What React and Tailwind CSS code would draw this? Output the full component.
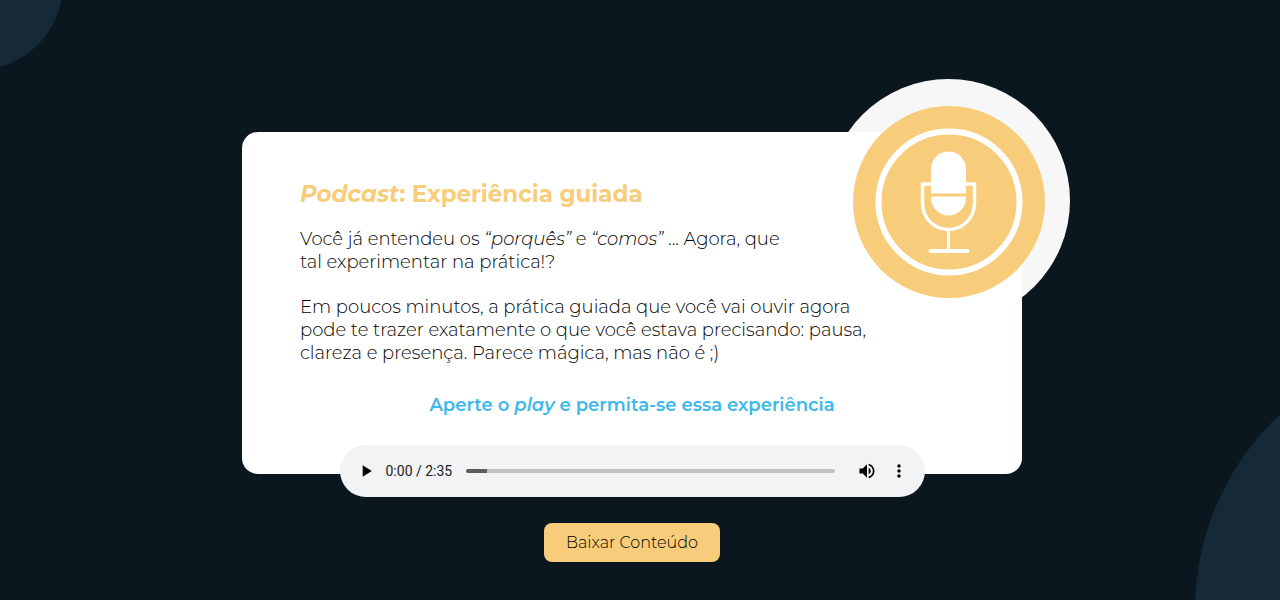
import { useState } from 'react'
import { MdPlayArrow, MdVolumeUp, MdMoreVert } from 'react-icons/md'

const DURATION = 155

function MicBadge() {
  return (
    <svg viewBox="0 0 192 192" className="w-full h-full" aria-hidden="true">
      <circle cx="96" cy="96" r="96" fill="#f7cd7b" />
      <circle cx="96" cy="96" r="70.5" fill="none" stroke="#fff" strokeWidth="6" />
      {/* Capsule */}
      <path d="M78 87.500V63a17.500 17.500 0 0 1 35 0v24.500z" fill="#fff" />
      <path d="M78 90.500h35v1.500a17.500 17.500 0 0 1-35 0z" fill="#fff" />
      {/* Cradle */}
      <path
        d="M78 78h-8.500v19.500a26 26 0 0 0 52 0V78H113"
        fill="none"
        stroke="#fff"
        strokeWidth="3.500"
      />
      <path d="M95.500 123v22" stroke="#fff" strokeWidth="3" />
      <path d="M77.500 145h37" stroke="#fff" strokeWidth="4" strokeLinecap="round" />
    </svg>
  )
}

function Player() {
  const [position, setPosition] = useState(9)
  const filled = (position / DURATION) * 100

  return (
    <div className="relative z-20 -mt-[29px] w-3/4 h-[52px] px-4 rounded-full bg-[#f1f3f4] flex items-center">
      <button type="button" aria-label="Play" className="shrink-0">
        <MdPlayArrow size={20} />
      </button>
      <span className="ml-[10px] text-sm text-[#202124] font-[Roboto,sans-serif] whitespace-nowrap">0:00 / 2:35</span>
      <input
        type="range"
        aria-label="Posição"
        min="0"
        max={DURATION}
        value={position}
        onChange={e => setPosition(Number(e.target.value))}
        className="ml-[14px] mr-[22px] flex-1 min-w-0 h-1 rounded-full appearance-none [&::-webkit-slider-thumb]:appearance-none [&::-webkit-slider-thumb]:w-0"
        style={{ background: `linear-gradient(to right, #5a5b5c ${filled}%, #c0c1c2 ${filled}%)` }}
      />
      <button type="button" aria-label="Volume" className="shrink-0">
        <MdVolumeUp size={20} />
      </button>
      <button type="button" aria-label="Mais opções" className="ml-3 shrink-0">
        <MdMoreVert size={20} />
      </button>
    </div>
  )
}

export default function App() {
  return (
    <main className="relative isolate overflow-hidden min-h-screen bg-[#0a171e] pt-[132px] pb-9 pl-4 pr-8 font-[Montserrat,Inter,sans-serif]">
      {/* Background circles */}
      <div className="absolute -z-10 -left-[109px] -top-[102px] size-[172px] rounded-full bg-[#152937]" />
      <div className="absolute -z-10 -right-[451px] top-[342px] size-[536px] rounded-full bg-[#152937]" />

      <div className="relative mx-auto w-full max-w-[780px] flex flex-col items-center">
        <div className="absolute -right-12 -top-[53px] size-[243px] rounded-full bg-[#f7f7f7]" />
        <div className="absolute z-20 -right-[23px] -top-[26px] size-48">
          <MicBadge />
        </div>

        <section className="relative z-10 w-full rounded-2xl bg-white pt-12 pb-[57px] px-[58px] text-lg leading-[23px] font-light text-black">
          <h1 className="text-[23px] leading-7 font-bold text-[#f7cd7b]">
            <em>Podcast</em>: Experiência guiada
          </h1>
          <p className="mt-5">
            Você já entendeu os <em>“porquês”</em> e <em>“comos”</em> ... Agora, que
            <br />
            tal experimentar na prática!?
          </p>
          <p className="mt-[22px]">
            Em poucos minutos, a prática guiada que você vai ouvir agora
            <br />
            pode te trazer exatamente o que você estava precisando: pausa,
            <br />
            clareza e presença. Parece mágica, mas não é ;)
          </p>
          <p className="mt-[29px] text-center font-semibold text-[#3eb8e8]">
            Aperte o <em>play</em> e permita-se essa experiência
          </p>
        </section>

        <Player />

        <a
          href="#"
          className="mt-[26px] h-[39px] px-[22px] rounded-lg bg-[#f7cd7b] text-base font-light text-black flex items-center"
        >
          Baixar Conteúdo
        </a>
      </div>
    </main>
  )
}
